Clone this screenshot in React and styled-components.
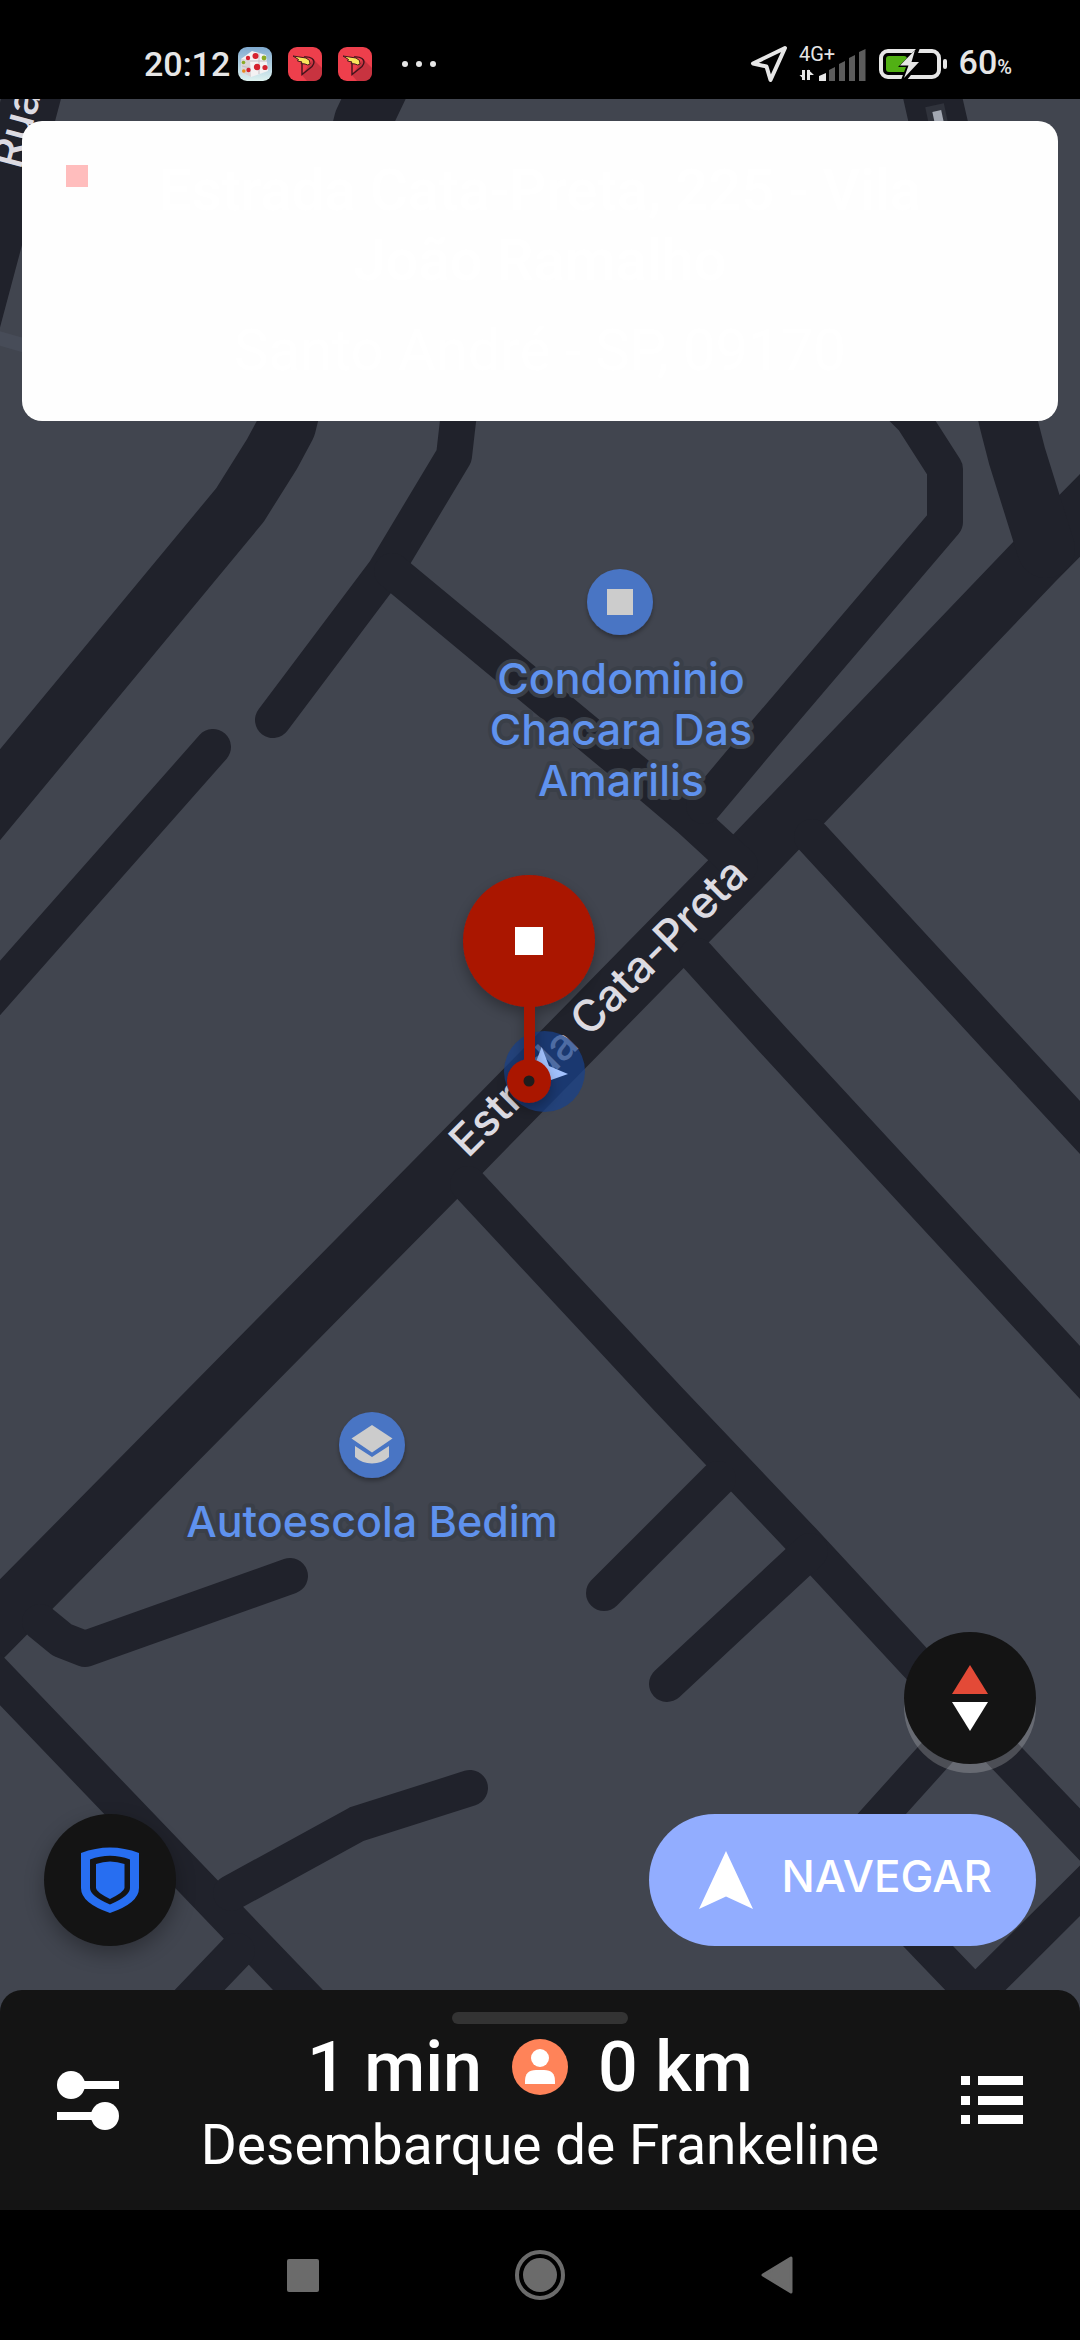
import React from 'react';
import styled, { createGlobalStyle } from 'styled-components';

const GlobalStyle = createGlobalStyle`
  * {
    box-sizing: border-box;
  }

  body {
    margin: 0;
    background: #000;
    font-family: Roboto, 'Noto Sans', sans-serif;
  }
`;

const Screen = styled.div`
  display: flex;
  flex-direction: column;
  min-height: 100vh;
  overflow: hidden;
`;

/* Status bar */

const StatusBar = styled.header`
  display: flex;
  justify-content: space-between;
  align-items: center;
  height: 99px;
  padding: 29px 68px 0 144px;
  background: #000;
  color: #e6e6e6;
`;

const StatusGroup = styled.div`
  display: flex;
  align-items: center;
  gap: ${props => props.$gap}px;
`;

const StatusText = styled.span`
  font-size: 34px;
  font-weight: 500;
  line-height: 40px;

  small {
    font-size: 20px;
  }
`;

const Notifications = styled(StatusGroup)`
  margin-left: 8px;
`;

/* Map */

const MapArea = styled.main`
  position: relative;
  display: flex;
  flex: 1;
  flex-direction: column;
  padding: 22px 22px 66px;
  background: #41454f;
`;

const MapCanvas = styled.svg`
  position: absolute;
  inset: 0;
  width: 100%;
  height: 100%;
`;

const Road = styled.path`
  fill: none;
  stroke: #20222b;
  stroke-width: ${props => (props.$wide ? 58 : 36)};
  stroke-linecap: round;
  stroke-linejoin: round;
`;

const PlaceLabel = styled.text`
  fill: #5f92ee;
  stroke: #3a3f48;
  stroke-width: 8;
  stroke-linejoin: round;
  paint-order: stroke;
  font-family: Inter, sans-serif;
  font-size: 43px;
  font-weight: 500;
  text-anchor: middle;
`;

const RoadLabel = styled.text`
  fill: #dcdbe2;
  font-family: Inter, sans-serif;
  font-size: 44px;
  font-weight: 500;
  text-anchor: middle;
`;

const AddressCard = styled.section`
  position: relative;
  display: flex;
  align-items: flex-start;
  gap: 22px;
  padding: 34px 44px 44px;
  border-radius: 20px;
  background: #fefefe;
`;

const StopMark = styled.span`
  flex: none;
  width: 22px;
  height: 22px;
  margin-top: 10px;
  background: #ffbdbd;
`;

const Address = styled.div`
  flex: 1;
  padding: 0 44px 2px 0;
  color: #fff;
  font-size: 58px;
  font-weight: 500;
  line-height: 70px;
  text-align: center;

  p {
    margin: 0;
  }

  p + p {
    padding-top: 30px;
    font-weight: 400;
    line-height: 50px;
  }
`;

const Controls = styled.div`
  position: relative;
  display: flex;
  flex-direction: column;
  align-items: flex-end;
  gap: 50px;
  margin-top: auto;
  padding: 0 22px;
`;

const ControlRow = styled.div`
  display: flex;
  justify-content: space-between;
  align-self: stretch;
`;

const RoundButton = styled.button`
  display: flex;
  align-items: center;
  justify-content: center;
  width: 132px;
  height: 132px;
  padding: 0;
  border: 0;
  border-radius: 50%;
  background: #141414;
  box-shadow: ${props => props.$shadow};
`;

const NavigateButton = styled.button`
  display: flex;
  align-items: center;
  gap: 28px;
  height: 132px;
  padding: 0 44px 0 50px;
  border: 0;
  border-radius: 66px;
  background: #92adff;
  color: #fff;
  font-family: Inter, sans-serif;
  font-size: 44px;
  font-weight: 500;

  span {
    padding-bottom: 8px;
  }
`;

/* Trip sheet */

const TripSheet = styled.section`
  position: relative;
  display: grid;
  grid-template-columns: 176px 1fr 176px;
  height: 220px;
  margin-top: -22px;
  border-radius: 22px 22px 0 0;
  background: #141414;
  color: #fff;
`;

const SheetButton = styled.button`
  display: flex;
  align-items: center;
  justify-content: center;
  padding: 0;
  border: 0;
  background: none;
`;

const TripInfo = styled.div`
  display: flex;
  flex-direction: column;
  align-items: center;
  padding-top: 22px;
`;

const Handle = styled.span`
  width: 176px;
  height: 12px;
  border-radius: 6px;
  background: #333;
`;

const TripTitle = styled.h1`
  display: grid;
  grid-template-columns: 1fr 56px 1fr;
  align-items: center;
  gap: 30px;
  margin: 0;
  font-size: 70px;
  font-weight: 500;
  line-height: 86px;
  white-space: nowrap;

  span:first-child {
    text-align: right;
  }
`;

const TripSubtitle = styled.p`
  margin: 0;
  font-size: 55px;
  line-height: 70px;
  white-space: nowrap;
`;

/* System navigation */

const SystemNav = styled.nav`
  display: flex;
  justify-content: center;
  height: 130px;
  background: #000;
`;

const SystemButton = styled(SheetButton)`
  width: 237px;
`;

const wideRoads = [
  'M-30 831 L240 505 L272 454 L287 426 L363 121 L384 77',
  'M-30 1651 L441 1174 L747 862 L1035 561 L1110 485',
  'M928 77 L938 121 L1008 421 L1017 456 L1046 549',
  'M36 80 L-36 350',
];

const roads = [
  'M463 390 L458 421 L454 456 L385 571 L273 720',
  'M392 571 L651 786 L690 819 L740 865',
  'M880 386 L913 419 L945 469 L945 522 L766 732 L704 806',
  'M812 837 L999 1040 L1110 1160',
  'M697 956 L773 1040 L1110 1405',
  'M468 1184 L669 1400 L803 1541 L916 1663 L1110 1866',
  'M718 1479 L604 1593',
  'M810 1551 L667 1684',
  'M970 1716 L843 1857 L928 1946 L975 1995 L1115 1856',
  'M-30 1648 L320 2013',
  'M237 1951 L170 2021',
  'M231 1893 L357 1824 L470 1788',
  'M40 1622 L62 1640 L85 1649 L290 1576',
  'M-30 1022 L213 747',
];

const StreetMap = () => (
  <MapCanvas viewBox="0 99 1080 1913" preserveAspectRatio="xMidYMid slice">
    <defs>
      <filter id="pin-shadow" x="-30%" y="-30%" width="160%" height="160%">
        <feDropShadow dx="0" dy="6" stdDeviation="7" floodColor="#000" floodOpacity="0.3" />
      </filter>
      <filter id="place-shadow" x="-30%" y="-30%" width="160%" height="160%">
        <feDropShadow dx="0" dy="3" stdDeviation="2" floodColor="#000" floodOpacity="0.3" />
      </filter>
    </defs>

    <path d="M-5 337 L40 350" fill="none" stroke="#474c58" strokeWidth="14" />
    {wideRoads.map(d => <Road key={d} d={d} $wide />)}
    {roads.map(d => <Road key={d} d={d} />)}

    <g transform="rotate(-12 938 124)">
      <rect x="929" y="105" width="19" height="40" fill="#30333c" />
      <rect x="935" y="111" width="9" height="34" fill="#a3a8b2" />
    </g>

    <RoadLabel transform="translate(31 132) rotate(-75)">Rua</RoadLabel>
    <RoadLabel transform="translate(609 1018) rotate(-45)">Estrada Cata-Preta</RoadLabel>

    <circle cx="620" cy="602" r="33" fill="#4a74c4" filter="url(#place-shadow)" />
    <rect x="607" y="589" width="26" height="26" fill="#ccc" />
    <PlaceLabel>
      <tspan x="621" y="694">Condominio</tspan>
      <tspan x="621" y="745">Chacara Das</tspan>
      <tspan x="621" y="796">Amarilis</tspan>
    </PlaceLabel>

    <circle cx="372" cy="1445" r="33" fill="#4a74c4" filter="url(#place-shadow)" />
    <path d="M372 1425 L392.500 1438.500 L372 1452.500 L351.500 1438.500 Z" fill="#ccc" />
    <path d="M355 1446 L372 1457 L389 1446 V1457 Q382 1463.500 372 1463.500 Q362 1463.500 355 1457 Z" fill="#ccc" />
    <PlaceLabel x="372" y="1537">Autoescola Bedim</PlaceLabel>

    <circle cx="544.500" cy="1071.500" r="40.500" fill="#18418b" fillOpacity="0.72" />
    <path d="M541.700 1047 L549 1066 L568 1074 L551 1080 L525 1090 Z" fill="#a3c3ff" />
    <g filter="url(#pin-shadow)">
      <rect x="524" y="1000" width="11" height="70" fill="#aa1400" />
      <circle cx="529" cy="941" r="66" fill="#aa1400" />
      <circle cx="529" cy="1081" r="22" fill="#aa1400" />
    </g>
    <rect x="515" y="927" width="28" height="28" fill="#fff" />
    <circle cx="529" cy="1081" r="5.500" fill="#1f1c1c" />
  </MapCanvas>
);

const CubeIcon = () => (
  <svg width="34" height="34" viewBox="0 0 34 34">
    <defs>
      <linearGradient id="sky" x1="0" y1="0" x2="0" y2="1">
        <stop offset="0" stopColor="#7fa9cf" />
        <stop offset="1" stopColor="#dff3f0" />
      </linearGradient>
    </defs>
    <rect width="34" height="34" rx="9" fill="url(#sky)" />
    <path d="M3 12 L14 4 L28 8 L30 24 L13 30 L4 26 Z" fill="#f4f2f3" />
    <path d="M3 12 L12 13 L13 30 L4 26 Z" fill="#d9d4d6" />
    <path d="M12 14 L29 14 M21 6 V27 M4 19 L12 21" stroke="#c5bfc4" strokeWidth="1" />
    <g fill="#d5222f">
      <circle cx="17.500" cy="9" r="3" />
      <circle cx="10" cy="11" r="2.200" />
      <circle cx="19" cy="20" r="3.200" />
      <circle cx="27" cy="20.500" r="2.600" />
      <circle cx="10.500" cy="23" r="2.200" />
    </g>
    <circle cx="26" cy="11" r="2.400" fill="#8bab24" />
    <circle cx="5.500" cy="15.500" r="1.800" fill="#8bab24" />
    <circle cx="5.800" cy="24" r="1.800" fill="#e88a1c" />
  </svg>
);

const WingIcon = () => (
  <svg width="34" height="34" viewBox="0 0 34 34">
    <rect width="34" height="34" rx="9" fill="#ee3f4c" />
    <path d="M25 12 L34 21 V25 Q34 34 25 34 H19 L14 28 Z" fill="#c83340" />
    <path
      d="M14 17 V27.500 L24 19.500 Q28 14.500 24 11.500 Q21 9.500 16 10"
      fill="none"
      stroke="#43131c"
      strokeWidth="1.400"
    />
    <path
      d="M5 9 L18 11 Q23 13 22 17 Q20 19 17 17 L13 16.500 L14 15 L9.500 14 L10.500 12.500 Z"
      fill="#fbe45c"
      stroke="#43131c"
      strokeWidth="1"
    />
  </svg>
);

const SignalIcon = () => (
  <svg width="69" height="48" viewBox="0 -6 69 48">
    <text x="0" y="15" fill="#e6e6e6" fontSize="20">4G+</text>
    <path d="M4.500 24 V34 M9.500 34 V24" stroke="#e6e6e6" strokeWidth="3" />
    <path d="M0.500 29 H6 V34.500 Z M15 29 H9 V23.500 Z" fill="#e6e6e6" />
    <path d="M20 30 L27 27 V35 H20 Z" fill="#e6e6e6" />
    <path
      d="M30 24 L36 21 V35 H30 Z M40 18 L46 15 V35 H40 Z M50 12 L56 9 V35 H50 Z M60 6 L66.500 3 V35 H60 Z"
      fill="#5c5c5c"
    />
  </svg>
);

const BatteryIcon = () => (
  <svg width="69" height="32" viewBox="0 0 69 32">
    <rect x="2" y="3" width="58" height="26" rx="7" fill="none" stroke="#e6e6e6" strokeWidth="4" />
    <rect x="7" y="8" width="21" height="16" rx="3" fill="#51b014" />
    <path d="M38 0 L19 19 H27 L22 32 H28 L43 13 H36 L41 0 Z" fill="#000" />
    <path d="M36 2 L21 17.500 H29.500 L25 30 L40 14 H32.500 Z" fill="#e6e6e6" />
    <rect x="64" y="11" width="4" height="10" rx="2" fill="#e6e6e6" />
  </svg>
);

const App = () => (
  <Screen>
    <GlobalStyle />

    <StatusBar>
      <StatusGroup>
        <StatusText>20:12</StatusText>
        <Notifications $gap={16}>
          <CubeIcon />
          <WingIcon />
          <WingIcon />
          <svg width="66" height="34" viewBox="0 0 66 34" fill="#e6e6e6">
            <circle cx="17" cy="17" r="3" />
            <circle cx="31" cy="17" r="3" />
            <circle cx="45" cy="17" r="3" />
          </svg>
        </Notifications>
      </StatusGroup>
      <StatusGroup $gap={11}>
        <svg width="38" height="38" viewBox="0 0 38 38">
          <path
            d="M35 3 L3 18.500 L16.500 21.500 L20.500 35 Z"
            fill="none"
            stroke="#e6e6e6"
            strokeWidth="4"
            strokeLinejoin="round"
          />
        </svg>
        <SignalIcon />
        <BatteryIcon />
        <StatusText>60<small>%</small></StatusText>
      </StatusGroup>
    </StatusBar>

    <MapArea>
      <StreetMap />
      <AddressCard>
        <StopMark />
        <Address>
          <p>Estrada Cata-Preta, 225 - Vila João Ramalho</p>
          <p>Santo André - SP, 09170</p>
        </Address>
      </AddressCard>

      <Controls>
        <RoundButton aria-label="Bússola" $shadow="0 9px 0 rgba(255, 255, 255, 0.2)">
          <svg width="36" height="66" viewBox="0 0 36 66">
            <path d="M18 0 L36 29 H0 Z" fill="#e34a37" />
            <path d="M0 37 H36 L18 66 Z" fill="#fff" />
          </svg>
        </RoundButton>
        <ControlRow>
          <RoundButton aria-label="Segurança" $shadow="0 8px 20px rgba(0, 0, 0, 0.3)">
            <svg width="58" height="66" viewBox="0 0 58 66">
              <path
                d="M0 6 Q29 -5 58 6 V41 Q58 56 29 66 Q0 56 0 41 Z M9 12.500 V41 Q9 49 29 57.500 Q49 49 49 41 V12.500 Q29 5 9 12.500 Z"
                fill="#276ef1"
                fillRule="evenodd"
              />
              <path d="M15 17 Q29 12 43.500 17 V41 Q43 45 29 52 Q15 45 15 41 Z" fill="#276ef1" />
            </svg>
          </RoundButton>
          <NavigateButton>
            <svg width="54" height="58" viewBox="0 0 54 58">
              <path d="M27 0 L54 58 L27 45.500 L0 58 Z" fill="#fff" />
            </svg>
            <span>NAVEGAR</span>
          </NavigateButton>
        </ControlRow>
      </Controls>
    </MapArea>

    <TripSheet>
      <SheetButton aria-label="Preferências">
        <svg width="62" height="60" viewBox="0 0 62 60" fill="#fff">
          <circle cx="14" cy="15" r="14" />
          <rect x="20" y="11" width="42" height="8" />
          <circle cx="48" cy="46" r="14" />
          <rect x="0" y="42" width="42" height="8" />
        </svg>
      </SheetButton>
      <TripInfo>
        <Handle />
        <TripTitle>
          <span>1 min</span>
          <svg width="56" height="56" viewBox="0 0 56 56">
            <circle cx="28" cy="28" r="28" fill="#ff8359" />
            <circle cx="28" cy="19" r="9" fill="#fff" />
            <path d="M13 45 V42 Q13 31 24 31 H32 Q43 31 43 42 V45 Z" fill="#fff" />
          </svg>
          <span>0 km</span>
        </TripTitle>
        <TripSubtitle>Desembarque de Frankeline</TripSubtitle>
      </TripInfo>
      <SheetButton aria-label="Lista de viagens">
        <svg width="62" height="48" viewBox="0 0 62 48" fill="#fff">
          <path d="M0 0 H9 V9 H0 Z M17 0 H62 V9 H17 Z" />
          <path d="M0 20 H9 V29 H0 Z M17 20 H62 V29 H17 Z" />
          <path d="M0 39 H9 V48 H0 Z M17 39 H62 V48 H17 Z" />
        </svg>
      </SheetButton>
    </TripSheet>

    <SystemNav>
      <SystemButton aria-label="Recentes">
        <svg width="32" height="33" viewBox="0 0 32 33">
          <rect width="32" height="33" rx="2" fill="#6b6b6b" />
        </svg>
      </SystemButton>
      <SystemButton aria-label="Início">
        <svg width="50" height="50" viewBox="0 0 50 50">
          <circle cx="25" cy="25" r="23" fill="none" stroke="#6b6b6b" strokeWidth="4" />
          <circle cx="25" cy="25" r="17" fill="#6b6b6b" />
        </svg>
      </SystemButton>
      <SystemButton aria-label="Voltar">
        <svg width="32" height="38" viewBox="0 0 32 38">
          <path
            d="M2 19 L30 2 V36 Z"
            fill="#6b6b6b"
            stroke="#6b6b6b"
            strokeWidth="3"
            strokeLinejoin="round"
          />
        </svg>
      </SystemButton>
    </SystemNav>
  </Screen>
);

export default App;
